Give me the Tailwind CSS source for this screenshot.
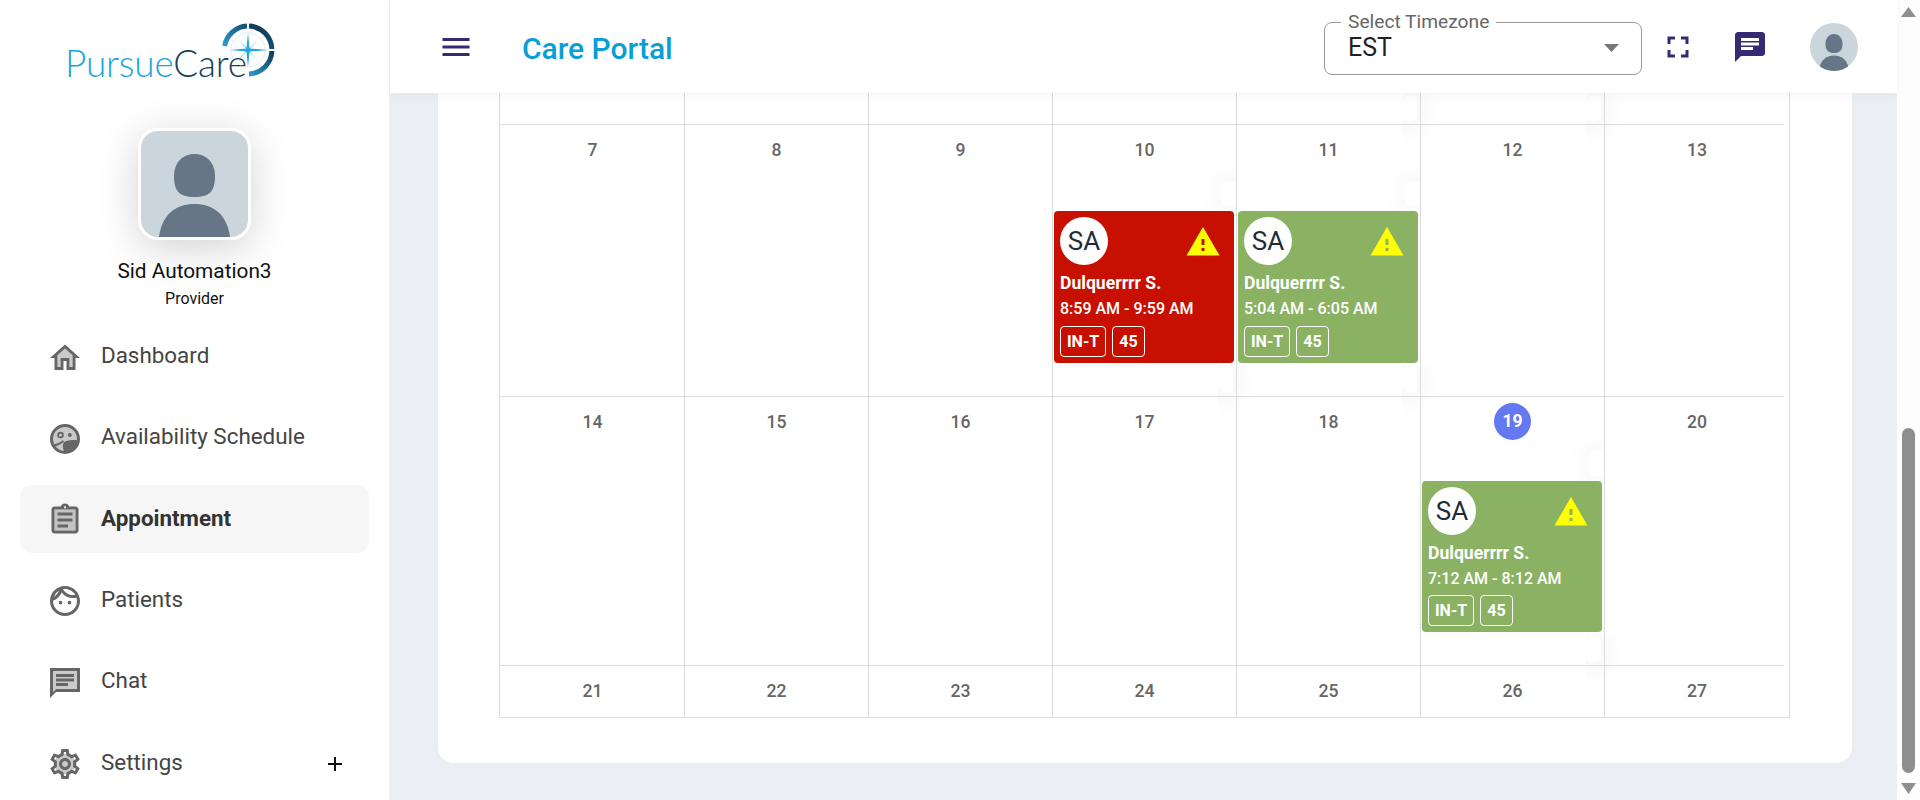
<!DOCTYPE html>
<html lang="en">
<head>
<meta charset="UTF-8">
<title>Care Portal</title>
<script src="https://cdn.jsdelivr.net/npm/@tailwindcss/browser@4"></script>
</head>
<body class="h-screen overflow-hidden flex bg-[#ebeff3] font-[Roboto,sans-serif] text-[#3a3a3a]">

<!-- sidebar -->
<aside class="w-[390px] shrink-0 h-full overflow-hidden bg-white border-r border-[#efefef] flex flex-col">
  <div class="h-[93px] shrink-0 relative">
    <span class="absolute left-[65px] top-[41px] font-[Lato,sans-serif] font-light text-[37px] leading-[44px] tracking-[-0.2px]"><span class="text-[#1ca4da]">Pursue</span><span class="text-[#15405f]">Care</span></span>
    <svg class="absolute left-[220px] top-[22px]" width="56" height="56" viewBox="0 0 56 56" fill="none">
      <defs>
        <linearGradient id="ringA" x1="0" y1="1" x2="1" y2="0"><stop offset="0" stop-color="#2a9ccb"/><stop offset="1" stop-color="#11507a"/></linearGradient>
        <linearGradient id="ringB" x1="0" y1="0" x2="0" y2="1"><stop offset="0" stop-color="#103c5c"/><stop offset="1" stop-color="#124e74"/></linearGradient>
        <linearGradient id="ringC" x1="1" y1="0" x2="0" y2="1"><stop offset="0" stop-color="#0f3b5b"/><stop offset="1" stop-color="#2a9ccb"/></linearGradient>
      </defs>
      <circle cx="28" cy="28" r="17" stroke="#b9c6cf" stroke-width="0.8" stroke-dasharray="1.2 1.2"/>
      <path d="M4.6 24 A24 24 0 0 1 27 4.1" stroke="url(#ringA)" stroke-width="5"/>
      <path d="M29 4.1 A24 24 0 0 1 51.9 27" stroke="url(#ringB)" stroke-width="5"/>
      <path d="M51.9 29 A24 24 0 0 1 29 51.9" stroke="url(#ringC)" stroke-width="5"/>
      <path d="M28 28 L18 18 L27 26 Z M28 28 L38 18 L30 27 Z M28 28 L38 38 L29 30 Z M28 28 L18 38 L26 29 Z" fill="#4fb3df"/>
      <path d="M28 11 L29.600 26.400 L48 28 L29.600 29.600 L28 45 L26.400 29.600 L10 28 L26.400 26.400 Z" fill="#23a5de"/>
    </svg>
  </div>

  <div class="mt-[35px] self-center w-[113px] h-[112px] shrink-0 rounded-[20px] border-[3px] border-white bg-[#cbd5dc] shadow-[0_8px_40px_rgba(0,0,0,0.18)] overflow-hidden flex justify-center">
    <svg width="107" height="106" viewBox="0 0 107 106"><path fill="#667686" d="M53.500 23c13 0 20.500 10 20.500 22 0 15-5 21-20.500 21S33 60 33 45c0-12 7.500-22 20.500-22z"/><path fill="#667686" d="M18 106c3-23 17-33 35.500-33S86 83 89 106z"/></svg>
  </div>
  <div class="mt-[17px] text-center text-[20.800px] leading-[28px] text-[#111]">Sid Automation3</div>
  <div class="mt-[4px] text-center text-[16px] leading-[20px] text-[#111]">Provider</div>

  <nav class="mt-[13.500px] px-[20px] flex flex-col gap-[13.300px] text-[22.400px] text-[#444]">
    <a class="h-[68px] shrink-0 pl-[27px] pt-[2px] flex items-center gap-[18px]">
      <svg width="36" height="36" viewBox="0 0 24 24"><path fill="#666" fill-opacity=".35" d="M7 10.19V18h2v-6h6v6h2v-7.810l-5-4.500z"/><path fill="#666" d="M12 3L2 12h3v8h6v-6h2v6h6v-8h3L12 3zm5 15h-2v-6H9v6H7v-7.810l5-4.500 5 4.500V18z"/></svg>
      <span class="-mt-[3px]">Dashboard</span>
    </a>
    <a class="h-[68px] shrink-0 pl-[27px] pt-[2px] flex items-center gap-[18px]">
      <svg width="36" height="36" viewBox="0 0 24 24"><circle cx="12" cy="12" r="9" fill="#c9c9c9" stroke="#666" stroke-width="2"/><circle cx="9" cy="9.300" r="1.600" fill="none" stroke="#666" stroke-width="1.200"/><circle cx="15.200" cy="9.300" r="1.300" fill="#666"/><path fill="none" stroke="#666" stroke-width="1.200" d="M3.800 16.500c3-.4 5.200-1.500 7.200-3.200"/><path fill="#666" d="M11 14.500c1.500-1.700 5.500-2.200 9.800-1.500-.4 4.500-3.800 8-8 8-.5 0-.8 0-1.300-.1-.8-2.400-1.300-4.600-.5-6.400z"/></svg>
      <span class="-mt-[3px]">Availability Schedule</span>
    </a>
    <a class="h-[68px] shrink-0 pl-[27px] pt-[2px] flex items-center gap-[18px] rounded-[12px] bg-[#f6f6f6] font-bold text-[#333]">
      <svg width="36" height="36" viewBox="0 0 24 24"><path fill="#666" fill-opacity=".35" d="M5 5h14v14H5z"/><path fill="#666" d="M7 15h7v2H7zM7 11h10v2H7zM7 7h10v2H7z"/><path fill="#666" d="M19 3h-4.180C14.400 1.840 13.300 1 12 1c-1.300 0-2.400.84-2.820 2H5c-1.100 0-2 .9-2 2v14c0 1.100.9 2 2 2h14c1.100 0 2-.9 2-2V5c0-1.100-.9-2-2-2zm-7-.25c.41 0 .75.34.75.75s-.34.75-.75.75-.75-.34-.75-.75.34-.75.75-.75zM19 19H5V5h14v14z"/></svg>
      <span class="-mt-[3px]">Appointment</span>
    </a>
    <a class="h-[68px] shrink-0 pl-[27px] pt-[2px] flex items-center gap-[18px]">
      <svg width="36" height="36" viewBox="0 0 24 24"><path fill="#666" d="M10.250 13a1.250 1.250 0 1 1-2.500 0 1.250 1.250 0 0 1 2.500 0zM15 11.750a1.250 1.250 0 1 0 0 2.500 1.250 1.250 0 0 0 0-2.500zm7 .25c0 5.520-4.480 10-10 10S2 17.520 2 12 6.480 2 12 2s10 4.480 10 10zM10.660 4.120C12.060 6.440 14.600 8 17.500 8c.46 0 .91-.05 1.340-.12C17.440 5.560 14.900 4 12 4c-.46 0-.91.05-1.340.12zM4.420 9.470a8.046 8.046 0 0 0 3.660-4.440 8.046 8.046 0 0 0-3.660 4.440zM20 12c0-.78-.12-1.530-.33-2.240-.7.15-1.420.24-2.170.24a10 10 0 0 1-7.760-3.690C8.670 8.900 6.550 10.840 4 11.860c.01.04 0 .09 0 .14 0 4.410 3.590 8 8 8s8-3.590 8-8z"/></svg>
      <span class="-mt-[3px]">Patients</span>
    </a>
    <a class="h-[68px] shrink-0 pl-[27px] pt-[2px] flex items-center gap-[18px]">
      <svg width="36" height="36" viewBox="0 0 24 24"><path fill="#666" fill-opacity=".35" d="M4 18l2-2h14V4H4z"/><path fill="#666" d="M20 2H2v20l4-4h16V2zm0 14H6l-2 2V4h16v12zM6 12h8v2H6zM6 9h12v2H6zM6 6h12v2H6z"/></svg>
      <span class="-mt-[3px]">Chat</span>
    </a>
    <a class="h-[68px] shrink-0 pl-[27px] pr-[26px] pt-[2px] flex items-center gap-[18px]">
      <svg width="36" height="36" viewBox="0 0 24 24"><circle cx="12" cy="12" r="7" fill="#666" fill-opacity=".35"/><path fill="#666" d="M19.430 12.980c.04-.32.07-.64.07-.98 0-.34-.03-.66-.07-.98l2.110-1.650c.19-.15.24-.42.12-.64l-2-3.460c-.09-.16-.26-.25-.44-.25-.06 0-.12.01-.17.03l-2.490 1c-.52-.4-1.080-.73-1.690-.98l-.38-2.650C14.460 2.180 14.250 2 14 2h-4c-.25 0-.46.18-.49.42l-.38 2.650c-.61.25-1.170.59-1.690.98l-2.490-1c-.06-.02-.12-.03-.18-.03-.17 0-.34.09-.43.25l-2 3.460c-.13.22-.07.49.12.64l2.110 1.650c-.04.32-.07.65-.07.98 0 .33.03.66.07.98l-2.110 1.650c-.19.15-.24.42-.12.64l2 3.460c.09.16.26.25.44.25.06 0 .12-.01.17-.03l2.490-1c.52.4 1.080.73 1.690.98l.38 2.650c.03.24.24.42.49.42h4c.25 0 .46-.18.49-.42l.38-2.650c.61-.25 1.170-.59 1.690-.98l2.490 1c.06.02.12.03.18.03.17 0 .34-.09.43-.25l2-3.460c.12-.22.07-.49-.12-.64l-2.110-1.650zm-1.980-1.710c.04.31.05.52.05.73 0 .21-.02.43-.05.73l-.14 1.130.89.7 1.080.84-.7 1.210-1.270-.51-1.040-.42-.9.68c-.43.32-.84.56-1.250.73l-1.060.43-.16 1.130-.2 1.350h-1.400l-.19-1.350-.16-1.130-1.060-.43c-.43-.18-.83-.41-1.230-.71l-.91-.7-1.060.43-1.270.51-.7-1.210 1.080-.84.89-.7-.14-1.130c-.03-.31-.05-.54-.05-.74s.02-.43.05-.73l.14-1.130-.89-.7-1.080-.84.7-1.210 1.270.51 1.040.42.9-.68c.43-.32.84-.56 1.250-.73l1.060-.43.16-1.130.2-1.350h1.390l.19 1.350.16 1.130 1.060.43c.43.18.83.41 1.230.71l.91.7 1.060-.43 1.270-.51.7 1.210-1.070.85-.89.7.14 1.130zM12 8c-2.210 0-4 1.790-4 4s1.790 4 4 4 4-1.790 4-4-1.790-4-4-4zm0 6c-1.100 0-2-.9-2-2s.9-2 2-2 2 .9 2 2-.9 2-2 2z"/></svg>
      <span class="-mt-[3px] flex-1">Settings</span>
      <svg width="16" height="16" viewBox="0 0 16 16"><path fill="#111" d="M7 1h2v6h6v2H9v6H7V9H1V7h6z"/></svg>
    </a>
  </nav>
</aside>

<!-- main column -->
<div class="flex-1 min-w-0 h-full flex flex-col">
  <header class="h-[93px] shrink-0 bg-white relative z-10 shadow-[0_4px_10px_rgba(0,0,0,0.03)] flex items-center pl-[48px]">
    <svg width="36" height="36" viewBox="0 0 24 24"><path fill="#352b73" d="M3 18h18v-2H3v2zm0-5h18v-2H3v2zm0-7v2h18V6H3z"/></svg>
    <h1 class="ml-[48px] mt-[5px] text-[30px] font-medium text-[#0a9ed6] leading-none">Care Portal</h1>
    <fieldset class="ml-auto -mt-[5px] w-[318px] h-[62px] border border-[#999] rounded-[8px] pl-[16px] pr-[22px] flex-none">
      <legend class="px-[7px] text-[19.200px] leading-[18px] text-[#666]">Select Timezone</legend>
      <div class="flex items-center justify-between pl-[7px] mt-[1px]">
        <span class="text-[25px] leading-[32px] text-[#222]">EST</span>
        <svg width="15" height="8" viewBox="0 0 15 8"><path fill="#777" d="M0 0h15L7.500 8z"/></svg>
      </div>
    </fieldset>
    <svg class="ml-[18px]" width="36" height="36" viewBox="0 0 24 24"><path fill="#352b73" d="M7 14H5v5h5v-2H7v-3zm-2-4h2V7h3V5H5v5zm12 7h-3v2h5v-5h-2v3zM14 5v2h3v3h2V5h-5z"/></svg>
    <svg class="ml-[36px]" width="36" height="36" viewBox="0 0 24 24"><path fill="#352b73" d="M20 2H4c-1.100 0-2 .9-2 2v18l4-4h14c1.100 0 2-.9 2-2V4c0-1.100-.9-2-2-2zM6 9h12v2H6V9zm8 5H6v-2h8v2zm4-6H6V6h12v2z"/></svg>
    <div class="ml-[42px] mr-[39px] w-[48px] h-[48px] rounded-full bg-[#cbd5dc] overflow-hidden">
      <svg width="48" height="48" viewBox="0 0 48 48"><path fill="#667686" d="M24 11c5.500 0 8.500 4.500 8.500 10 0 6.500-3 9-8.500 9s-8.500-2.500-8.500-9c0-5.500 3-10 8.500-10z"/><path fill="#667686" d="M9 48c1-11 7-15.500 15-15.500S38 37 39 48z"/></svg>
    </div>
  </header>

  <main class="flex-1 min-h-0 pl-[48px] pr-[45px]">
    <div class="relative bg-white rounded-b-[16px] h-[670px] pl-[61px] shadow-[0_2px_8px_rgba(0,0,0,0.02)]">
      <!-- clipped shadows of hidden entries, they sit under the grid lines -->
      <div class="absolute left-[964px] top-0 w-[48px] h-[60px] overflow-hidden"><div class="absolute left-0 top-[3px] w-[15px] h-[25px] bg-white rounded-[6px] shadow-[0_4px_30px_rgba(0,0,0,0.14)]"></div></div>
      <div class="absolute left-[1148px] top-0 w-[48px] h-[60px] overflow-hidden"><div class="absolute left-0 top-[3px] w-[15px] h-[25px] bg-white rounded-[6px] shadow-[0_4px_30px_rgba(0,0,0,0.14)]"></div></div>
      <div class="absolute left-[752px] top-[67px] w-[46px] h-[51px] overflow-hidden"><div class="absolute left-[31px] top-[21px] w-[30px] h-[25px] bg-white rounded-[6px] shadow-[0_0_30px_rgba(0,0,0,0.07)]"></div></div>
      <div class="absolute left-[936px] top-[67px] w-[46px] h-[51px] overflow-hidden"><div class="absolute left-[31px] top-[21px] w-[30px] h-[25px] bg-white rounded-[6px] shadow-[0_0_30px_rgba(0,0,0,0.07)]"></div></div>
      <div class="absolute left-[1120px] top-[337px] w-[46px] h-[51px] overflow-hidden"><div class="absolute left-[31px] top-[21px] w-[30px] h-[25px] bg-white rounded-[6px] shadow-[0_0_30px_rgba(0,0,0,0.07)]"></div></div>
      <div class="absolute left-[780px] top-[272px] w-[48px] h-[60px] overflow-hidden"><div class="absolute left-0 top-[2px] w-[15px] h-[25px] bg-white rounded-[6px] shadow-[0_4px_30px_rgba(0,0,0,0.14)]"></div></div>
      <div class="absolute left-[964px] top-[272px] w-[48px] h-[60px] overflow-hidden"><div class="absolute left-0 top-[2px] w-[15px] h-[25px] bg-white rounded-[6px] shadow-[0_4px_30px_rgba(0,0,0,0.14)]"></div></div>
      <div class="absolute left-[1148px] top-[542px] w-[48px] h-[60px] overflow-hidden"><div class="absolute left-0 top-[2px] w-[15px] h-[25px] bg-white rounded-[6px] shadow-[0_4px_30px_rgba(0,0,0,0.14)]"></div></div>

      <div class="relative w-[1291px] border-x border-b border-[#dcdcdc] text-[17.600px] font-medium text-[#666]">
        <!-- clipped first week -->
        <div class="grid grid-cols-7 pl-px h-[31px]">
          <div class="border-r border-[#dcdcdc]"></div><div class="border-r border-[#dcdcdc]"></div><div class="border-r border-[#dcdcdc]"></div><div class="border-r border-[#dcdcdc]"></div><div class="border-r border-[#dcdcdc]"></div><div class="border-r border-[#dcdcdc]"></div><div></div>
        </div>
        <div class="h-px bg-[#dcdcdc] mr-[5px]"></div>

        <!-- week 7-13 -->
        <div class="grid grid-cols-7 pl-px h-[271px]">
          <div class="border-r border-[#dcdcdc] pt-[7px]"><div class="h-[37px] flex items-center justify-center">7</div></div>
          <div class="border-r border-[#dcdcdc] pt-[7px]"><div class="h-[37px] flex items-center justify-center">8</div></div>
          <div class="border-r border-[#dcdcdc] pt-[7px]"><div class="h-[37px] flex items-center justify-center">9</div></div>
          <div class="border-r border-[#dcdcdc] pt-[7px]">
            <div class="h-[37px] flex items-center justify-center">10</div>
            <div class="mt-[42px] ml-px mr-[2px] h-[152px] rounded-[4px] bg-[#c81000] px-[6px] pt-[6px] text-white">
              <div class="flex items-start justify-between">
                <div class="w-[48px] h-[48px] rounded-full bg-white flex items-center justify-center text-[26px] font-normal text-[#222b36]">SA</div>
                <svg class="mt-[7px] mr-[7px]" width="36" height="36" viewBox="0 0 24 24"><path fill="#ffff00" d="M1 21h22L12 2 1 21zm12-3h-2v-2h2v2zm0-4h-2v-4h2v4z"/></svg>
              </div>
              <div class="mt-[8px] text-[17.600px] leading-[20px] font-bold">Dulquerrrr S.</div>
              <div class="mt-[6px] text-[16px] leading-[20px] font-medium">8:59 AM - 9:59 AM</div>
              <div class="mt-[7px] flex gap-[6px] text-[16px] leading-[29px] font-bold">
                <span class="w-[46px] h-[31px] border border-white rounded-[4px] text-center">IN-T</span>
                <span class="w-[33px] h-[31px] border border-white rounded-[4px] text-center">45</span>
              </div>
            </div>
          </div>
          <div class="border-r border-[#dcdcdc] pt-[7px]">
            <div class="h-[37px] flex items-center justify-center">11</div>
            <div class="mt-[42px] ml-px mr-[2px] h-[152px] rounded-[4px] bg-[#8bb263] px-[6px] pt-[6px] text-white">
              <div class="flex items-start justify-between">
                <div class="w-[48px] h-[48px] rounded-full bg-white flex items-center justify-center text-[26px] font-normal text-[#222b36]">SA</div>
                <svg class="mt-[7px] mr-[7px]" width="36" height="36" viewBox="0 0 24 24"><path fill="#ffff00" d="M1 21h22L12 2 1 21zm12-3h-2v-2h2v2zm0-4h-2v-4h2v4z"/></svg>
              </div>
              <div class="mt-[8px] text-[17.600px] leading-[20px] font-bold">Dulquerrrr S.</div>
              <div class="mt-[6px] text-[16px] leading-[20px] font-medium">5:04 AM - 6:05 AM</div>
              <div class="mt-[7px] flex gap-[6px] text-[16px] leading-[29px] font-bold">
                <span class="w-[46px] h-[31px] border border-white rounded-[4px] text-center">IN-T</span>
                <span class="w-[33px] h-[31px] border border-white rounded-[4px] text-center">45</span>
              </div>
            </div>
          </div>
          <div class="border-r border-[#dcdcdc] pt-[7px]"><div class="h-[37px] flex items-center justify-center">12</div></div>
          <div class="pt-[7px]"><div class="h-[37px] flex items-center justify-center">13</div></div>
        </div>
        <div class="h-px bg-[#dcdcdc] mr-[5px]"></div>

        <!-- week 14-20 -->
        <div class="grid grid-cols-7 pl-px h-[268px]">
          <div class="border-r border-[#dcdcdc] pt-[7px]"><div class="h-[37px] flex items-center justify-center">14</div></div>
          <div class="border-r border-[#dcdcdc] pt-[7px]"><div class="h-[37px] flex items-center justify-center">15</div></div>
          <div class="border-r border-[#dcdcdc] pt-[7px]"><div class="h-[37px] flex items-center justify-center">16</div></div>
          <div class="border-r border-[#dcdcdc] pt-[7px]"><div class="h-[37px] flex items-center justify-center">17</div></div>
          <div class="border-r border-[#dcdcdc] pt-[7px]"><div class="h-[37px] flex items-center justify-center">18</div></div>
          <div class="border-r border-[#dcdcdc] pt-[6px]">
            <div class="h-[37px] flex items-center justify-center"><span class="w-[37px] h-[37px] rounded-full bg-[#6478f0] text-white font-bold flex items-center justify-center">19</span></div>
            <div class="mt-[41px] ml-px mr-[2px] h-[151px] rounded-[4px] bg-[#8bb263] px-[6px] pt-[6px] text-white">
              <div class="flex items-start justify-between">
                <div class="w-[48px] h-[48px] rounded-full bg-white flex items-center justify-center text-[26px] font-normal text-[#222b36]">SA</div>
                <svg class="mt-[7px] mr-[7px]" width="36" height="36" viewBox="0 0 24 24"><path fill="#ffff00" d="M1 21h22L12 2 1 21zm12-3h-2v-2h2v2zm0-4h-2v-4h2v4z"/></svg>
              </div>
              <div class="mt-[8px] text-[17.600px] leading-[20px] font-bold">Dulquerrrr S.</div>
              <div class="mt-[6px] text-[16px] leading-[20px] font-medium">7:12 AM - 8:12 AM</div>
              <div class="mt-[6px] flex gap-[6px] text-[16px] leading-[29px] font-bold">
                <span class="w-[46px] h-[31px] border border-white rounded-[4px] text-center">IN-T</span>
                <span class="w-[33px] h-[31px] border border-white rounded-[4px] text-center">45</span>
              </div>
            </div>
          </div>
          <div class="pt-[7px]"><div class="h-[37px] flex items-center justify-center">20</div></div>
        </div>
        <div class="h-px bg-[#dcdcdc] mr-[5px]"></div>

        <!-- week 21-27 -->
        <div class="grid grid-cols-7 pl-px h-[51px]">
          <div class="border-r border-[#dcdcdc] pt-[7px]"><div class="h-[37px] flex items-center justify-center">21</div></div>
          <div class="border-r border-[#dcdcdc] pt-[7px]"><div class="h-[37px] flex items-center justify-center">22</div></div>
          <div class="border-r border-[#dcdcdc] pt-[7px]"><div class="h-[37px] flex items-center justify-center">23</div></div>
          <div class="border-r border-[#dcdcdc] pt-[7px]"><div class="h-[37px] flex items-center justify-center">24</div></div>
          <div class="border-r border-[#dcdcdc] pt-[7px]"><div class="h-[37px] flex items-center justify-center">25</div></div>
          <div class="border-r border-[#dcdcdc] pt-[7px]"><div class="h-[37px] flex items-center justify-center">26</div></div>
          <div class="pt-[7px]"><div class="h-[37px] flex items-center justify-center">27</div></div>
        </div>
      </div>
    </div>
  </main>
</div>

<!-- page scrollbar -->
<div class="w-[23px] shrink-0 h-full bg-[#fdfdfd] flex flex-col items-center">
  <svg class="mt-[7px]" width="15" height="10" viewBox="0 0 15 10"><path fill="#8e8e8e" d="M7.500 0L15 10H0z"/></svg>
  <div class="mt-[411px] w-[13px] h-[345px] rounded-full bg-[#8e8e8e]"></div>
  <svg class="mt-[10px]" width="15" height="11" viewBox="0 0 15 11"><path fill="#8e8e8e" d="M0 0h15L7.500 11z"/></svg>
</div>

</body>
</html>
